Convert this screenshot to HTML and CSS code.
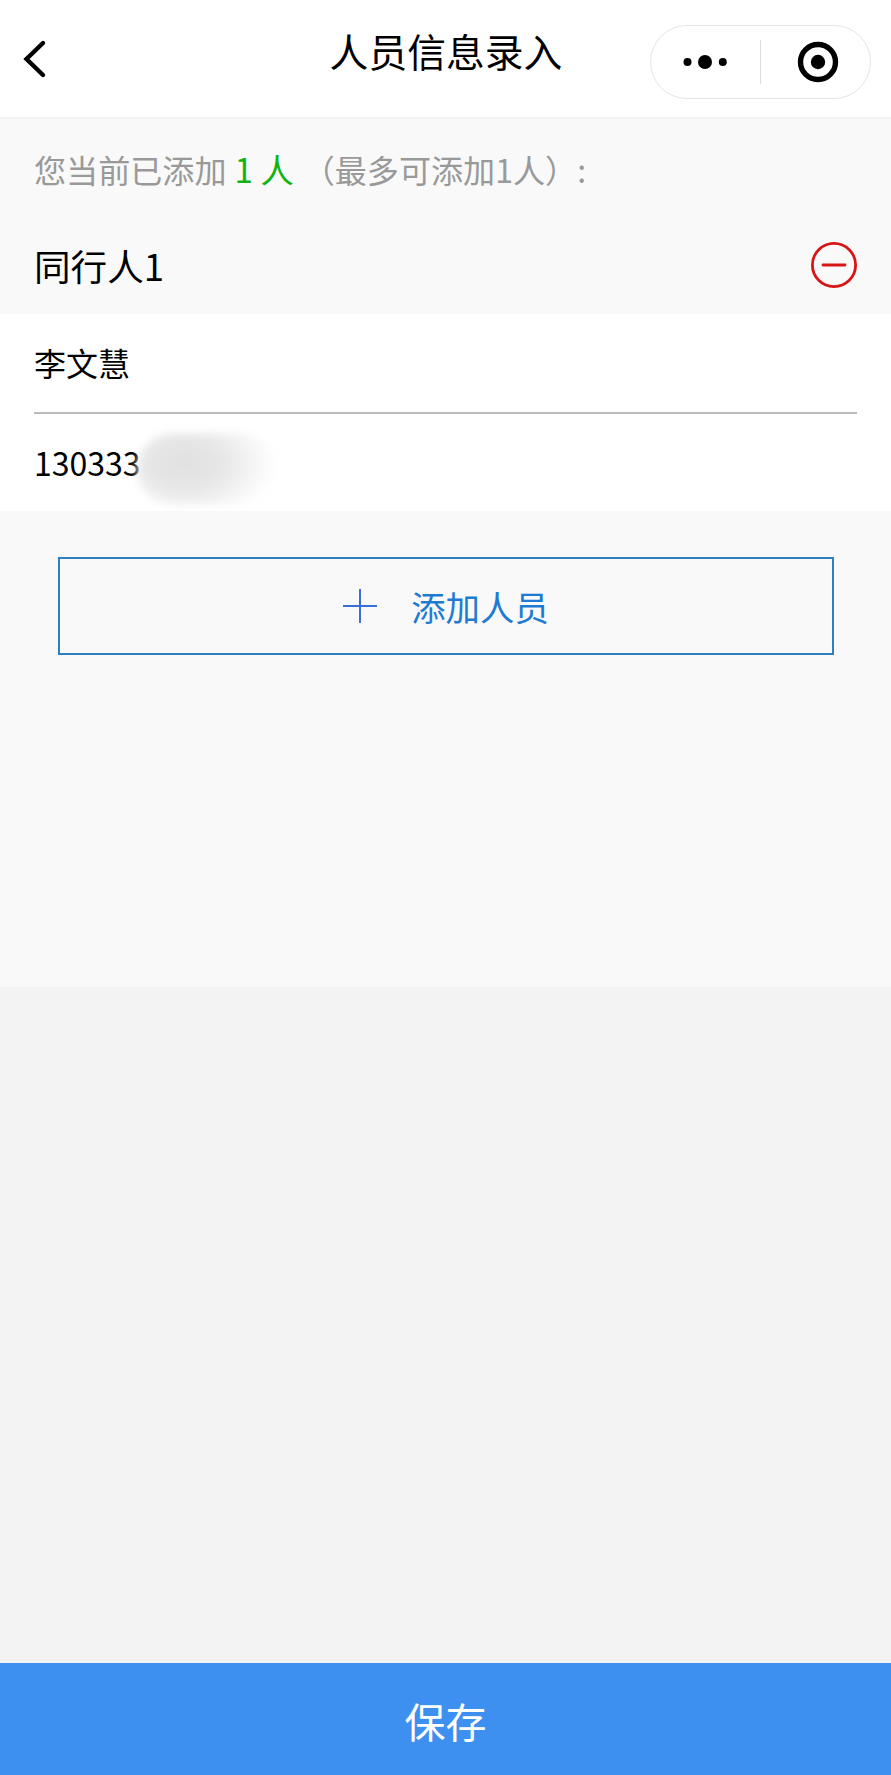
FILE: index.html
```
<!DOCTYPE html>
<html lang="zh-CN">
<head>
    <meta charset="UTF-8">
    <meta name="viewport" content="width=device-width, initial-scale=1.0">
    <title>人员信息录入</title>
    <link rel="stylesheet" href="styles.css">
</head>
<body>
<div class="page">
    <header class="navbar">
        <svg class="back" width="30" height="44" viewBox="0 0 30 44">
            <path d="M22 6 L5.5 22 L22 38" fill="none" stroke="#000" stroke-width="4.4" stroke-linecap="round" stroke-linejoin="miter"/>
        </svg>
        <h1 class="title">人员信息录入</h1>
        <div class="capsule">
            <svg class="dots" width="44" height="16" viewBox="0 0 44 16">
                <circle cx="4.5" cy="8" r="4"/>
                <circle cx="22" cy="8" r="7"/>
                <circle cx="39.8" cy="8" r="4"/>
            </svg>
            <span class="divider"></span>
            <svg class="target" width="42" height="42" viewBox="0 0 42 42">
                <circle cx="21" cy="21" r="17.5" fill="none" stroke="#000" stroke-width="5.4"/>
                <circle cx="21" cy="21" r="7.2"/>
            </svg>
        </div>
    </header>

    <main class="content">
        <p class="summary">您当前已添加<span class="count">1 人</span>（最多可添加1人）:</p>
        <div class="person-head">
            <span>同行人1</span>
            <svg class="remove" width="46" height="46" viewBox="0 0 46 46">
                <circle cx="23" cy="23" r="21.6"/>
                <path d="M12 23 H34"/>
            </svg>
        </div>
        <div class="person-form">
            <div class="field">李文慧</div>
            <div class="field field-id">130333<span class="mask"></span></div>
        </div>
        <button class="add-btn">
            <svg class="plus" width="34" height="34" viewBox="0 0 34 34">
                <path d="M0 17 H34 M17 0 V34"/>
            </svg>
            <span>添加人员</span>
        </button>
    </main>

    <button class="save-btn">保存</button>
</div>
</body>
</html>
```
FILE: styles.css
```
* {
    box-sizing: border-box;
}

body {
    margin: 0;
    font-family: 'Noto Sans CJK SC', sans-serif;
    color: #000;
}

button {
    font-family: inherit;
    cursor: pointer;
}

.page {
    display: flex;
    flex-direction: column;
    height: 1775px;
    background: #f3f3f3;
}

.navbar {
    display: grid;
    grid-template-columns: 1fr auto 1fr;
    height: 119px;
    background: #fff;
    border-bottom: 2px solid #f3f3f3;
}

.back {
    margin: 37px 0 0 21px;
}

.title {
    margin: 22px 0 0 1px;
    font-size: 38.8px;
    font-weight: 400;
    line-height: 56px;
}

.capsule {
    display: flex;
    align-items: center;
    justify-self: end;
    width: 221px;
    height: 74px;
    margin: 25px 20px 0 0;
    border: 1px solid #e4e4e4;
    border-radius: 37px;
}

.dots {
    margin-left: 32px;
}

.divider {
    width: 1px;
    height: 44px;
    margin-left: 33px;
    background: #dcdcdc;
}

.target {
    margin-left: 36px;
}

.content {
    height: 868px;
    background: #f9f9f9;
}

.summary {
    height: 102px;
    margin: 0;
    padding: 26px 0 0 34px;
    font-size: 32.1px;
    line-height: 48px;
    color: #999;
}

.count {
    margin: 0 9px 0 8px;
    font-size: 33.3px;
    color: #12b312;
}

.person-head {
    display: flex;
    justify-content: space-between;
    height: 93px;
    padding: 20px 34px 0;
    font-size: 36.6px;
    line-height: 50px;
}

.remove {
    margin-top: 1px;
    fill: none;
    stroke: #d91414;
    stroke-width: 2.8;
    stroke-linecap: round;
}

.person-form {
    height: 197px;
    padding: 0 34px;
    background: #fff;
}

.field {
    height: 97px;
    font-size: 32px;
    line-height: 97px;
}

.field:first-child {
    height: 100px;
    border-bottom: 2px solid #bbb;
}

.field-id {
    display: flex;
}

/* smudge covering the rest of the id number */
.mask {
    width: 140px;
    height: 72px;
    margin: 19px 0 0 -4px;
    border-radius: 36px;
    background: radial-gradient(ellipse 92px 60px at 48px 30px, #e1e1e1 0%, #e6e6e6 40%, #f5f5f5 75%, #fff 100%);
    filter: blur(4px);
}

.add-btn {
    display: flex;
    align-items: center;
    justify-content: center;
    gap: 34px;
    width: 776px;
    height: 98px;
    margin: 46px 0 0 58px;
    padding: 0;
    border: 2px solid #2d7fc1;
    background: transparent;
    font-size: 34.4px;
    line-height: 50px;
    color: #1f7bd2;
}

.plus {
    fill: none;
    stroke: #3b6fd8;
    stroke-width: 2;
}

.save-btn {
    height: 112px;
    margin-top: auto;
    padding: 2px 0 0;
    border: none;
    background: #3d90ef;
    font-size: 41px;
    color: #fff;
}
```
